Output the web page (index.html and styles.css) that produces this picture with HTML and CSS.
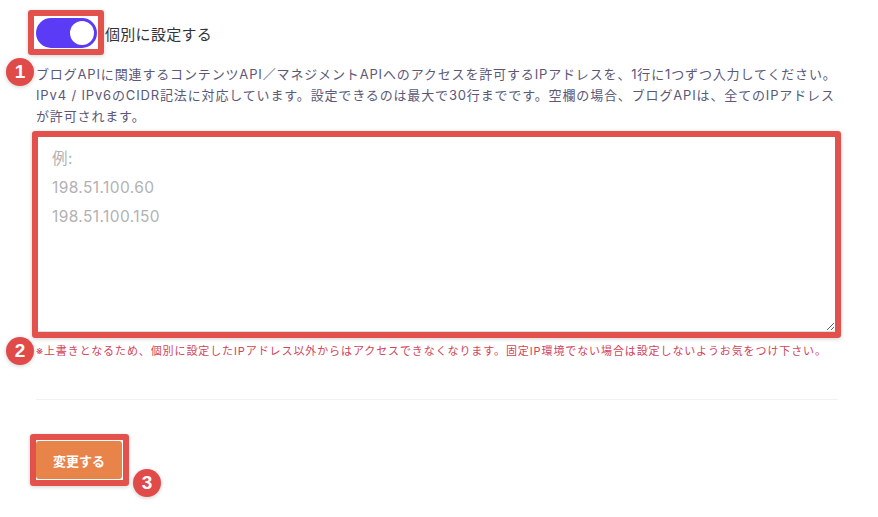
FILE: index.html
```html
<!DOCTYPE html>
<html lang="ja">
<head>
    <meta charset="UTF-8">
    <meta name="viewport" content="width=device-width, initial-scale=1.0">
    <title>IPアドレス制限</title>
    <link rel="stylesheet" href="styles.css">
</head>
<body>
    <form class="panel">
        <div class="toggle-row">
            <span class="mark box-toggle"></span>
            <span class="badge badge-1">1</span>
            <div class="switch on"><div class="knob"></div></div>
            <label class="toggle-label">個別に設定する</label>
        </div>

        <p class="desc">ブログAPIに関連するコンテンツAPI／マネジメントAPIへのアクセスを許可するIPアドレスを、1行に1つずつ入力してください。<br>IPv4 / IPv6のCIDR記法に対応しています。設定できるのは最大で30行までです。空欄の場合、ブログAPIは、全てのIPアドレス<br>が許可されます。</p>

        <div class="field">
            <span class="mark box-field"></span>
            <textarea class="ip-list" placeholder="例:&#10;198.51.100.60&#10;198.51.100.150"></textarea>
        </div>

        <p class="note">
            <span class="badge badge-2">2</span>
            ※上書きとなるため、個別に設定したIPアドレス以外からはアクセスできなくなります。固定IP環境でない場合は設定しないようお気をつけ下さい。
        </p>

        <hr class="divider">

        <div class="actions">
            <span class="mark box-button"></span>
            <span class="badge badge-3">3</span>
            <button type="button" class="submit">変更する</button>
        </div>
    </form>
</body>
</html>
```

FILE: styles.css
```css
* {
    box-sizing: border-box;
    margin: 0;
    padding: 0;
}

html, body {
    min-height: 100vh;
}

body {
    background: #ffffff;
    font-family: "Inter", "Noto Sans CJK JP", sans-serif;
    color: #333333;
}

.panel {
    width: 836px;
    padding: 18px 0 40px 36px;
}

.toggle-row {
    position: relative;
    display: flex;
    align-items: center;
    height: 30px;
}

.switch {
    width: 61px;
    height: 30px;
    border-radius: 15px;
    background: #5b3bf5;
    display: flex;
    align-items: center;
    justify-content: flex-end;
    padding-right: 3px;
}

.knob {
    width: 24px;
    height: 24px;
    border-radius: 50%;
    background: #ffffff;
}

.toggle-label {
    margin-left: 8px;
    font-size: 15px;
    letter-spacing: 0.3px;
    color: #333333;
}

.desc {
    margin-top: 16px;
    font-size: 13px;
    line-height: 21px;
    letter-spacing: 0.85px;
    color: #5a5878;
    white-space: nowrap;
}

.field {
    position: relative;
    margin-top: 9px;
}

.ip-list {
    display: block;
    width: 800px;
    height: 196px;
    border: 1px solid #dddddd;
    border-radius: 2px;
    padding: 7px 15px;
    font-family: "Inter", "Noto Sans CJK JP", sans-serif;
    font-size: 15.5px;
    line-height: 29px;
    letter-spacing: 0.4px;
    color: #333333;
}

.ip-list::placeholder {
    color: #b2b2b2;
}

.note {
    position: relative;
    margin-top: 12px;
    font-size: 11px;
    line-height: 15px;
    letter-spacing: 0.9px;
    color: #d2435a;
    white-space: nowrap;
}

.divider {
    width: 802px;
    margin-top: 40px;
    border: none;
    border-top: 1px solid #f1f0f5;
}

.actions {
    position: relative;
    margin-top: 41px;
    width: 86px;
}

.submit {
    display: block;
    width: 86px;
    height: 38px;
    border: none;
    border-radius: 3px;
    background: #e8834a;
    color: #ffffff;
    font-family: "Inter", "Noto Sans CJK JP", sans-serif;
    font-size: 13px;
    font-weight: 700;
}

/* annotation overlays */
.mark {
    position: absolute;
    border: 6px solid #e2514c;
    border-radius: 3px;
    box-shadow: 0 1px 4px rgba(0, 0, 0, 0.18);
    z-index: 2;
}

.box-toggle {
    left: -8px;
    top: -8px;
    width: 76px;
    height: 45px;
}

.box-field {
    left: -4px;
    top: -5px;
    width: 809px;
    height: 207px;
}

.box-button {
    left: -6px;
    top: -7px;
    width: 99px;
    height: 52px;
}

.badge {
    position: absolute;
    width: 28px;
    height: 28px;
    border-radius: 50%;
    background: #e04b49;
    color: #ffffff;
    font-family: "Liberation Sans", sans-serif;
    font-size: 19px;
    font-weight: 700;
    line-height: 28px;
    text-align: center;
    letter-spacing: 0;
    box-shadow: 0 1px 4px rgba(0, 0, 0, 0.2);
    z-index: 3;
}

.badge-1 {
    left: -30px;
    top: 40px;
}

.badge-2 {
    left: -30px;
    top: -7px;
}

.badge-3 {
    left: 97px;
    top: 28px;
}
```
